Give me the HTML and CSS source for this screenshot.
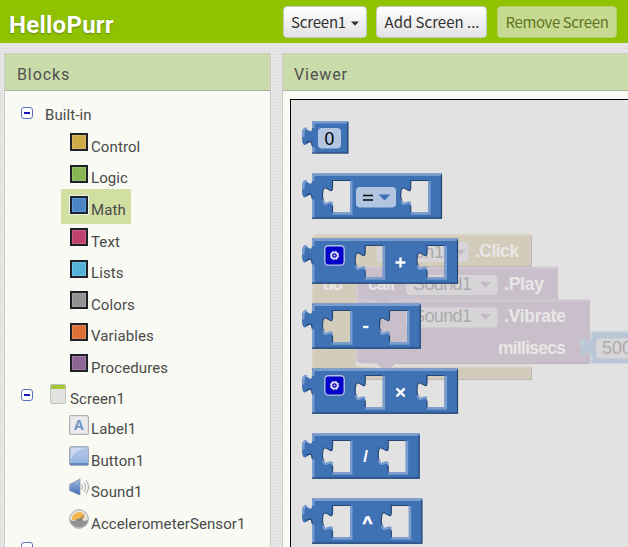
FILE: index.html
```html
<!DOCTYPE html>
<html lang="en">
<head>
<meta charset="utf-8">
<title>HelloPurr</title>
<link rel="stylesheet" href="styles.css">
</head>
<body>
<header class="topbar">
  <h1 class="project">HelloPurr</h1>
  <div class="actions">
    <button class="btn btn-screen">Screen1<svg class="caret" viewBox="0 0 8 5"><path d="M0 0.5h8L4 4.7z"/></svg></button>
    <button class="btn btn-add">Add Screen ...</button>
    <button class="btn btn-remove" disabled>Remove Screen</button>
  </div>
</header>
<main class="workspace">
  <section class="panel blocks">
    <h2 class="panel-title">Blocks</h2>
    <div class="tree">
      <div class="node root first"><i class="toggle"></i><span>Built-in</span></div>
      <div class="node leaf"><i class="swatch control"></i><span>Control</span></div>
      <div class="node leaf"><i class="swatch logic"></i><span>Logic</span></div>
      <div class="node leaf selected"><i class="swatch math"></i><span>Math</span></div>
      <div class="node leaf"><i class="swatch text"></i><span>Text</span></div>
      <div class="node leaf"><i class="swatch lists"></i><span>Lists</span></div>
      <div class="node leaf"><i class="swatch colors"></i><span>Colors</span></div>
      <div class="node leaf"><i class="swatch variables"></i><span>Variables</span></div>
      <div class="node leaf"><i class="swatch procedures"></i><span>Procedures</span></div>
      <div class="node root screen"><i class="toggle"></i>
        <svg class="screen-icon" viewBox="0 0 16 20"><rect x=".5" y=".5" width="15" height="19" rx="1.5" fill="#e2e3e0" stroke="#bfc1bb"/><path d="M1 1h14v4H1z" fill="#a4c639"/></svg>
        <span>Screen1</span></div>
      <div class="node leaf"><svg class="icon" viewBox="0 0 20 20"><rect x=".6" y=".6" width="18.8" height="18.8" rx="1.5" fill="#ebebed" stroke="#aeb0b3" stroke-width="1.2"/><text x="10" y="15" text-anchor="middle" class="label-letter">A</text></svg><span>Label1</span></div>
      <div class="node leaf"><svg class="icon" viewBox="0 0 20 20"><defs><linearGradient id="bt" x2="0" y2="1"><stop stop-color="#b4c9e8"/><stop offset="1" stop-color="#94b3e0"/></linearGradient></defs><rect x=".6" y=".6" width="18.8" height="18.8" rx="2" fill="url(#bt)" stroke="#a6adb8" stroke-width="1.2"/><path d="M2 2h14Q6 4 2 13z" fill="#cbdaf0"/><path d="M1 17h18v2H1z" fill="#6488c0"/></svg><span>Button1</span></div>
      <div class="node leaf"><svg class="icon" viewBox="0 0 20 20"><defs><linearGradient id="sp" x2="0" y2="1"><stop stop-color="#a8c1e6"/><stop offset="1" stop-color="#3c68b0"/></linearGradient></defs><path d="M.7 6.500 11 1v16L.7 12.500z" fill="url(#sp)" stroke="#7d8fae" stroke-width=".8"/><path d="M12.500 6.500q2 2.500 0 5.500M14.800 4.500q3.400 4.500 0 9.500M17 2.500q5 6.500 0 13.500" fill="none" stroke="#aaa" stroke-width="1.100"/></svg><span>Sound1</span></div>
      <div class="node leaf"><svg class="icon" viewBox="0 0 20 20"><circle cx="10" cy="10" r="9.300" fill="#e3e3e1" stroke="#aaa"/><path d="M3 11a7 7 0 0 1 11-6.500l2 3-2.500 3.500z" fill="#f6b74b"/><path d="M.8 10.500Q4 13 6.500 11Q10 7.500 13.500 11Q16 13 19.200 10.500A9.300 9.300 0 0 1 .8 10.500" fill="#929292"/><path d="M9 11.500 15.500 5l-3.500 8z" fill="#858585"/></svg><span>AccelerometerSensor1</span></div>
      <div class="node root last"><i class="toggle"></i></div>
    </div>
  </section>
  <section class="panel viewer">
    <h2 class="panel-title">Viewer</h2>
    <div class="canvas">
      <svg class="stage" width="337" height="447" viewBox="291 100 337 447">
        <defs>
          <g id="socket">
            <path class="lite" d="M18.800 7.500v32.500H0M-8.800 27c.5 8 5-1 8.800 3.200"/>
            <path class="dark" d="M17.500 7H0v6.200c0 12.500-10-10-10 9.400q0 2.500 1 4.400M0 32v7"/>
          </g>
          <path id="leftEdge" class="lite" d="M1.200 45V26M-8.800 16q0-10 3.500-8.200M1.200 7.500V1.200"/>
          <path id="tabEdge" class="dark" d="M0 25c0-6-3-4.500-6-3.200"/>
          <g id="gear">
            <rect x="12.800" y="7.200" width="19.400" height="19.400" rx="3.500" fill="#0000c8" stroke="#b4c0e0" stroke-width="1.400"/>
            <circle cx="22.500" cy="17" r="3.200" fill="none" stroke="#dcdcf0" stroke-width="1.800"/>
            <circle cx="22.500" cy="17" r="4.300" fill="none" stroke="#dcdcf0" stroke-width="1" stroke-dasharray="1.690 1.690"/>
            <circle cx="22.500" cy="17" r=".9" fill="#dcdcf0"/>
          </g>
        </defs>

        <g class="ghost">
          <path class="event" d="M312 239q0-4.500 5-4.500h215V267H356.500v99.500H532V380H312z"/>
          <path class="event-edge" d="M312.800 379V239q0-3.700 4-3.700H532"/>
          <path class="pale" d="M358 363q2 3 6 3h12l5 4.500h8l5-4.500h138"/>
          <path class="call" d="M356.500 267h201v32.500h32v64H396l-5 4.500h-9l-6-4.500h-13q-6.500 0-6.500-6.500z"/>
          <path class="call-edge" d="M357.300 357v-89.500H557v31.500M356.500 300.500h17l5 4h9l6-4H589"/>
          <path class="call-dark" d="M557 268v31.500M589 300.500v63H396M531.500 236v30.500H400M531.500 367v12.500H312"/>
          <path class="number" d="M590.500 331.500H628v32h-37.500v-7c0-12.500-10 10-10-9.400s10 3.100 10-9.400z"/>
          <path class="number-edge" d="M591.500 363v-7M591.500 338v-6H628M581.500 347q0-9 3-8"/>
          <rect class="pill" x="376.500" y="242" width="92" height="20" rx="4"/>
          <rect class="pill" x="406" y="275" width="91.500" height="20" rx="4"/>
          <rect class="pill" x="406" y="307.500" width="91.500" height="20" rx="4"/>
          <rect class="pill" x="596" y="338.500" width="40" height="20" rx="4"/>
          <path class="arrow" d="M455 249.500h11l-5.500 6zM480 282h11l-5.500 6zM480 314h11l-5.500 6z"/>
          <text class="field" x="384" y="257.500" textLength="60">Button1</text>
          <text class="field" x="413" y="290" textLength="59">Sound1</text>
          <text class="field" x="413" y="322" textLength="59">Sound1</text>
          <text class="field" x="602" y="354">500</text>
          <text class="word" x="475" y="257" textLength="44">.Click</text>
          <text class="word" x="323" y="290" textLength="20">do</text>
          <text class="word" x="368" y="290" textLength="27">call</text>
          <text class="word" x="504" y="290" textLength="40">.Play</text>
          <text class="word" x="504" y="322" textLength="62">.Vibrate</text>
          <text class="word" x="498" y="354" textLength="68">millisecs</text>
        </g>

        <g transform="translate(312 121)">
          <path class="body" d="M0 0h36.300v32.600H0V25c0-12.500-10 10-10-9.400S0 18.700 0 6.200z"/>
          <path class="lite" d="M1.200 32V26M-8.800 16q0-10 3.500-8.200M1.200 7V1.200H36"/>
          <path class="dark" d="M35.800 1v31H0"/><use href="#tabEdge"/>
          <rect class="input" x="6" y="7" width="23" height="20.500" rx="4"/>
          <text class="value" x="17.300" y="23.500" text-anchor="middle">0</text>
        </g>

        <g transform="translate(312 173.500)">
          <path class="body" d="M0 0h130v45.200H0V25c0-12.500-10 10-10-9.400S0 18.700 0 6.200zM20.500 7v6.200c0 12.500-10-10-10 9.400s10-3.100 10 9.400v7H38V7zM98.700 7v6.200c0 12.500-10-10-10 9.400s10-3.100 10 9.400v7h17.500V7z"/>
          <use href="#leftEdge"/><use href="#tabEdge"/><path class="lite" d="M1 1.200h129"/><path class="dark" d="M129.500 1v43.700H0"/>
          <use href="#socket" x="20.500"/><use href="#socket" x="98.700"/>
          <rect class="input" x="44" y="13.500" width="40" height="20.500" rx="4"/>
          <path d="M51 22h10M51 26.500h10" stroke="#000" stroke-width="1.700"/>
          <path d="M66.500 21h12l-6 6z" fill="#3f71b5"/>
        </g>

        <g transform="translate(312 238.500)">
          <path class="body" d="M0 0h146v45.200H0V25c0-12.500-10 10-10-9.400S0 18.700 0 6.200zM53.200 7v6.200c0 12.500-10-10-10 9.400s10-3.100 10 9.400v7h17.500V7zM115 7v6.200c0 12.500-10-10-10 9.400s10-3.100 10 9.400v7h17.500V7z"/>
          <use href="#leftEdge"/><use href="#tabEdge"/><path class="lite" d="M1 1.200h145"/><path class="dark" d="M145.500 1v43.700H0"/>
          <use href="#socket" x="53.200"/><use href="#socket" x="115"/><use href="#gear"/>
          <path class="sign" d="M83.500 24h10M88.500 19v10"/>
        </g>

        <g transform="translate(312 303.500)">
          <path class="body" d="M0 0h108.700v45.200H0V25c0-12.500-10 10-10-9.400S0 18.700 0 6.200zM20.500 7v6.200c0 12.500-10-10-10 9.400s10-3.100 10 9.400v7H38V7zM77.500 7v6.200c0 12.500-10-10-10 9.400s10-3.100 10 9.400v7H95V7z"/>
          <use href="#leftEdge"/><use href="#tabEdge"/><path class="lite" d="M1 1.200h107.500"/><path class="dark" d="M108.200 1v43.700H0"/>
          <use href="#socket" x="20.500"/><use href="#socket" x="77.500"/>
          <path class="sign" d="M51 23.500h5.500"/>
        </g>

        <g transform="translate(312 368.500)">
          <path class="body" d="M0 0h146v45.200H0V25c0-12.500-10 10-10-9.400S0 18.700 0 6.200zM53.200 7v6.200c0 12.500-10-10-10 9.400s10-3.100 10 9.400v7h17.500V7zM115 7v6.200c0 12.500-10-10-10 9.400s10-3.100 10 9.400v7h17.500V7z"/>
          <use href="#leftEdge"/><use href="#tabEdge"/><path class="lite" d="M1 1.200h145"/><path class="dark" d="M145.500 1v43.700H0"/>
          <use href="#socket" x="53.200"/><use href="#socket" x="115"/><use href="#gear"/>
          <path class="sign" d="m84.500 19.800 8.200 8.200m0-8.200-8.200 8.200"/>
        </g>

        <g transform="translate(312 433.500)">
          <path class="body" d="M0 0h107.600v45.200H0V25c0-12.500-10 10-10-9.400S0 18.700 0 6.200zM20.500 7v6.200c0 12.500-10-10-10 9.400s10-3.100 10 9.400v7H38V7zM76.200 7v6.200c0 12.500-10-10-10 9.400s10-3.100 10 9.400v7h17.500V7z"/>
          <use href="#leftEdge"/><use href="#tabEdge"/><path class="lite" d="M1 1.200h106.500"/><path class="dark" d="M107.100 1v43.700H0"/>
          <use href="#socket" x="20.500"/><use href="#socket" x="76.200"/>
          <text class="op" x="53.500" y="28.500" text-anchor="middle">/</text>
        </g>

        <g transform="translate(312 498.500)">
          <path class="body" d="M0 0h110.300v45.200H0V25c0-12.500-10 10-10-9.400S0 18.700 0 6.200zM20.500 7v6.200c0 12.500-10-10-10 9.400s10-3.100 10 9.400v7H38V7zM79.300 7v6.200c0 12.500-10-10-10 9.400s10-3.100 10 9.400v7h17.500V7z"/>
          <use href="#leftEdge"/><use href="#tabEdge"/><path class="lite" d="M1 1.200h109"/><path class="dark" d="M109.800 1v43.700H0"/>
          <use href="#socket" x="20.500"/><use href="#socket" x="79.300"/>
          <text class="op caret-op" x="55.500" y="29" text-anchor="middle">^</text>
        </g>
      </svg>
    </div>
  </section>
</main>
</body>
</html>
```
FILE: styles.css
```css
* { box-sizing: border-box; }
body {
  margin: 0;
  width: 628px;
  height: 547px;
  overflow: hidden;
  display: flex;
  flex-direction: column;
  font-family: Roboto, "Liberation Sans", sans-serif;
  color: #4a4a4a;
  background:
    repeating-linear-gradient(0deg, rgba(120,120,120,.05) 0 1px, transparent 1px 3px),
    repeating-linear-gradient(90deg, rgba(120,120,120,.05) 0 1px, transparent 1px 2px),
    #e9e9e9;
}
h1, h2 { margin: 0; }
.topbar {
  flex: none;
  height: 43px;
  display: flex;
  background: #8fc302;
}
.project {
  width: 283px;
  padding: 10px 0 0 9px;
  font-size: 24px;
  line-height: 30px;
  font-weight: 700;
  letter-spacing: .25px;
  color: #fff;
  text-shadow: 0 1px 2px rgba(70,90,20,.6);
}
.actions { display: flex; padding-top: 6px; }
.btn {
  height: 32px;
  padding: 0 0 2px;
  border: 1px solid #c6c9bd;
  border-radius: 4px;
  background: linear-gradient(#fff, #e3e3e5);
  font-family: "Noto Sans CJK SC", "Noto Sans", sans-serif;
  font-size: 15px;
  color: #303030;
  white-space: nowrap;
}
.btn-screen { width: 84px; margin-right: 9px; letter-spacing: -.2px; }
.btn-add { width: 111px; margin-right: 10px; padding-left: 1px; }
.btn-remove {
  width: 120px;
  letter-spacing: -.4px;
  color: #627522;
  background: #c7da91;
  border-color: #b6d06c;
}
.caret { width: 8px; height: 5px; margin: 0 0 2px 5px; fill: #303030; }

.workspace {
  flex: 1;
  min-height: 0;
  display: flex;
  gap: 11px;
  padding: 10px 0 0 4px;
}
.panel {
  display: flex;
  flex-direction: column;
  border: 1px solid #c9cac6;
  border-bottom: 0;
  background: #f8faf3;
}
.blocks { flex: none; width: 267px; }
.viewer { flex: 1; min-width: 0; border-right: 0; }
.viewer .panel-title { padding-left: 11px; }
.panel-title {
  flex: none;
  height: 37px;
  padding: 3px 0 0 12px;
  border-bottom: 1px solid #a9b19e;
  background: #cadcaa;
  font-size: 16px;
  line-height: 35px;
  font-weight: 400;
  letter-spacing: .9px;
  color: #505050;
}
.tree {
  flex: 1;
  min-height: 0;
  overflow: hidden;
  padding-top: 8px;
  font-size: 15px;
  letter-spacing: .1px;
}
.node { display: flex; align-items: center; height: 31.570px; white-space: nowrap; }
.root { padding-left: 16px; }
.first { height: 27.570px; padding-top: 4px; }
.leaf { padding-left: 64px; gap: 3px; }
.leaf span { padding-top: 9px; }
.selected { position: relative; }
.selected::before {
  content: "";
  position: absolute;
  left: 56px;
  top: -1px;
  width: 70px;
  height: 35px;
  background: #d2dfa2;
}
.selected > * { position: relative; }
.toggle {
  flex: none;
  width: 12px;
  height: 12px;
  margin: 0 12px 4px 0;
  border: 1px solid #5f6fc0;
  border-radius: 3px;
  background: linear-gradient(#1717b8, #1717b8) center / 6px 2px no-repeat, #fff;
}
.swatch {
  width: 18px;
  height: 18px;
  margin-left: 1px;
  border: 2px solid #1d2228;
  box-shadow: inset 0 0 0 1px rgba(255,255,255,.16);
}
.control { background: #ceaa49; }
.logic { background: #88b653; }
.math { background: #4d84c4; box-shadow: 0 0 0 1px #eaf2f0, inset 0 0 0 1px #5d98dc; }
.text { background: #c0406e; }
.lists { background: #55b2db; }
.colors { background: #929292; }
.variables { background: #dc7037; }
.procedures { background: #8e6696; }
.icon { width: 20px; height: 20px; margin-right: -1px; }
.screen { height: 29.900px; padding-top: 5px; }
.screen .toggle { margin-right: 17px; }
.screen-icon { width: 16px; height: 20px; margin: 0 4px 6px 0; }
.screen span { padding-top: 4px; }
.label-letter { font: 700 14px "Open Sans", sans-serif; fill: #7296c8; }
.last { align-items: flex-start; padding-top: 7px; }

.canvas {
  flex: 1;
  min-height: 0;
  margin: 8px 0 0 7px;
  border: solid #000;
  border-width: 1px 0 0 1px;
  background: #e2e2e2;
  overflow: hidden;
}
.stage { display: block; }
.body { fill: #3f71b5; fill-rule: evenodd; }
.lite { fill: none; stroke: #7a9dd0; stroke-width: 2.400; }
.dark { fill: none; stroke: #254573; stroke-width: 1.200; }
.input { fill: #b2c6e2; }
.value { font: 17.500px "Liberation Sans", sans-serif; fill: #000; }
.sign { fill: none; stroke: #fff; stroke-width: 2.400; }
.op { font: 700 17px "Liberation Sans", sans-serif; fill: #fff; }
.caret-op { stroke: #fff; stroke-width: .7; }
.event { fill: #d4ccba; }
.event-edge { fill: none; stroke: #d9d3c6; stroke-width: 2; }
.pale { fill: none; stroke: #e0dcd6; stroke-width: 2.400; }
.call { fill: #c8bfca; }
.call-edge { fill: none; stroke: #d1cad3; stroke-width: 2; }
.call-dark { fill: none; stroke: #bdb6b9; stroke-width: 1; }
.number { fill: #bac6d6; }
.number-edge { fill: none; stroke: #c7d0dd; stroke-width: 2; }
.pill { fill: #d7d5d8; }
.arrow { fill: #c3bcc4; }
.field { font: 18px "Liberation Sans", sans-serif; fill: #acabac; }
.word { font: 700 17.500px "Liberation Sans", sans-serif; fill: #e8e7e6; }
```
